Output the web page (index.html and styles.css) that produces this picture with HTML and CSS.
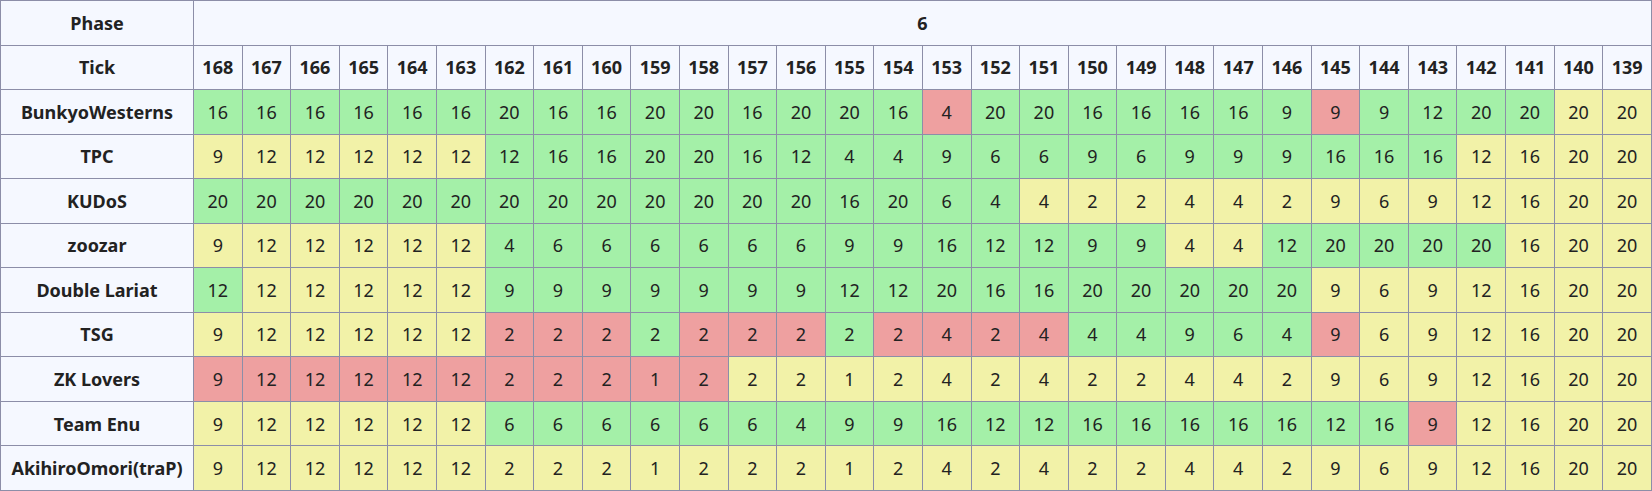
FILE: index.html
```html
<!DOCTYPE html>
<html>
<head>
<meta charset="utf-8">
<link rel="stylesheet" href="styles.css">
</head>
<body>
<table class="grid" id="grid">
<colgroup><col class="c-name"></colgroup>
<tbody id="body">
<tr><th>Phase</th><th colspan="30">6</th></tr>
</tbody>
</table>
<script src="app.js"></script>
</body>
</html>
```
FILE: styles.css
```css
html, body {
  margin: 0;
  padding: 0;
  background: #ffffff;
}
.grid {
  width: 1652px;
  height: 491px;
  border-collapse: collapse;
  table-layout: fixed;
  font-family: "Noto Sans", "Open Sans", sans-serif;
  font-size: 18px;
  color: #222222;
}
.c-name {
  width: 193px;
}
.grid th, .grid td {
  border: 1px solid #8c8ea8;
  text-align: center;
  padding: 0;
  white-space: nowrap;
}
.grid th {
  background: #f5f8ff;
  font-weight: 700;
}
.grid td {
  font-weight: 400;
}
.g { background: #a4f0a8; }
.y { background: #f2f2a8; }
.r { background: #eea0a0; }
```
FILE: app.js
```js
var teams = [
  ["BunkyoWesterns", "16 16 16 16 16 16 20 16 16 20 20 16 20 20 16 4 20 20 16 16 16 16 9 9 9 12 20 20 20 20", "G6 G9 R1 G7 R1 G4 Y2"],
  ["TPC", "9 12 12 12 12 12 12 16 16 20 20 16 12 4 4 9 6 6 9 6 9 9 9 16 16 16 12 16 20 20", "Y6 G20 Y4"],
  ["KUDoS", "20 20 20 20 20 20 20 20 20 20 20 20 20 16 20 6 4 4 2 2 4 4 2 9 6 9 12 16 20 20", "G17 Y13"],
  ["zoozar", "9 12 12 12 12 12 4 6 6 6 6 6 6 9 9 16 12 12 9 9 4 4 12 20 20 20 20 16 20 20", "Y6 G14 Y2 G5 Y3"],
  ["Double Lariat", "12 12 12 12 12 12 9 9 9 9 9 9 9 12 12 20 16 16 20 20 20 20 20 9 6 9 12 16 20 20", "G1 Y5 G17 Y7"],
  ["TSG", "9 12 12 12 12 12 2 2 2 2 2 2 2 2 2 4 2 4 4 4 9 6 4 9 6 9 12 16 20 20", "Y6 R3 G1 R3 G1 R4 G5 R1 Y6"],
  ["ZK Lovers", "9 12 12 12 12 12 2 2 2 1 2 2 2 1 2 4 2 4 2 2 4 4 2 9 6 9 12 16 20 20", "R11 Y19"],
  ["Team Enu", "9 12 12 12 12 12 6 6 6 6 6 6 4 9 9 16 12 12 16 16 16 16 16 12 16 9 12 16 20 20", "Y6 G19 R1 Y4"],
  ["AkihiroOmori(traP)", "9 12 12 12 12 12 2 2 2 1 2 2 2 1 2 4 2 4 2 2 4 4 2 9 6 9 12 16 20 20", "Y30"]
];
var body = document.getElementById("body");
var tick = document.createElement("tr");
var th = document.createElement("th");
th.textContent = "Tick";
tick.appendChild(th);
for (var t = 168; t >= 139; t--) {
  var h = document.createElement("th");
  h.textContent = String(t);
  tick.appendChild(h);
}
body.appendChild(tick);
teams.forEach(function (row) {
  var tr = document.createElement("tr");
  var n = document.createElement("th");
  n.textContent = row[0];
  tr.appendChild(n);
  var vals = row[1].split(" ");
  var cls = [];
  row[2].split(" ").forEach(function (seg) {
    var c = seg.charAt(0).toLowerCase();
    var k = parseInt(seg.slice(1), 10);
    for (var i = 0; i < k; i++) cls.push(c);
  });
  vals.forEach(function (v, i) {
    var td = document.createElement("td");
    td.className = cls[i];
    td.textContent = v;
    tr.appendChild(td);
  });
  body.appendChild(tr);
});
```
